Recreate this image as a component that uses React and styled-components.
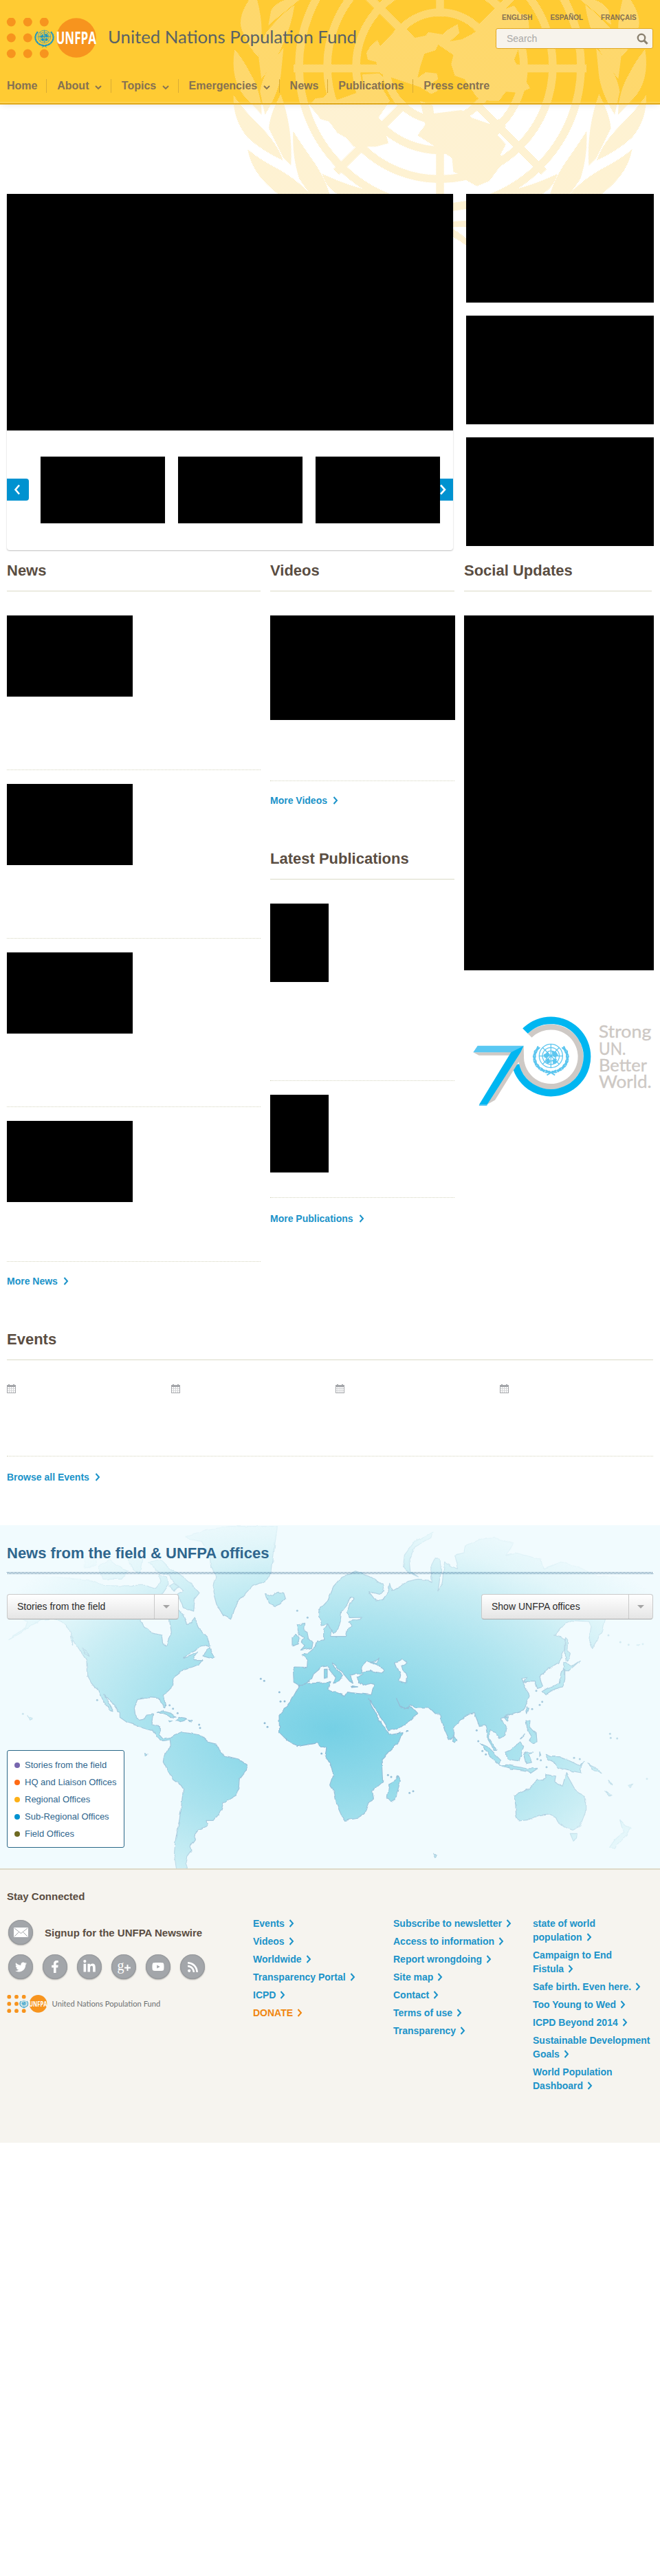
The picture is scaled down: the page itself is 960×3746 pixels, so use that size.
import React from "react";
import styled, { createGlobalStyle } from "styled-components";
import { FaTwitter, FaFacebookF, FaLinkedinIn, FaYoutube, FaRss } from "react-icons/fa";

const GlobalStyle = createGlobalStyle`
  * { box-sizing: border-box; }
  body { margin: 0; background: #fff; font-family: "Liberation Sans", Arial, Helvetica, sans-serif; color: #5a4d42; }
  svg { display: block; }
  ul { list-style: none; margin: 0; padding: 0; }
  h2, h3, p { margin: 0; }
`;

const Page = styled.div`
  position: relative;
  width: 960px;
  min-height: 3746px;
  overflow: hidden;
`;

/* ---------- header ---------- */
const HeaderBar = styled.header`
  height: 152px;
  background: #ffcb33;
  border-bottom: 2px solid #e0a91c;
  box-shadow: inset 0 -2px 0 #ffd350, 0 3px 9px -3px rgba(0, 0, 0, 0.12);
`;
const Watermark = styled.svg`
  position: absolute;
  top: 0;
  left: 330px;
`;
const HeaderContent = styled.div`
  position: relative;
  height: 152px;
  border-bottom: 2px solid #e0a91c;
`;
const HeaderTop = styled.div`
  display: flex;
  justify-content: space-between;
  height: 110px;
  padding: 20px 10px 0;
`;
const LogoLink = styled.a`
  margin: 6px 0 0 -1px;
`;
const HeaderTools = styled.div`
  width: 229px;
`;
const Languages = styled.ul`
  display: flex;
  gap: 26px;
  padding-left: 9px;
  font: bold 10px/12px "Liberation Sans", Arial, sans-serif;
  color: #857152;
`;
const SearchBox = styled.div`
  display: flex;
  justify-content: space-between;
  align-items: center;
  height: 30px;
  margin-top: 9px;
  padding: 0 6px 0 15px;
  border: 1px solid #e0a722;
  border-radius: 3px;
  background: #f7f3ec;
  font-size: 14px;
  color: #aaa9a7;
`;
const Nav = styled.nav`
  display: flex;
  padding-top: 5px;
`;
const NavItem = styled.a`
  display: flex;
  align-items: center;
  gap: 8.6px;
  height: 20px;
  padding: 0 12.8px 0 15px;
  border-right: 1px solid #d9ab35;
  font: bold 16px/20px "Liberation Sans", Arial, sans-serif;
  color: #857152;
  &:first-child { padding-left: 10px; }
  &:last-child { border: 0; }
  svg { margin-top: 5px; }
`;

/* ---------- main content ---------- */
const Media = styled.div`
  width: ${(p) => p.$w}px;
  height: ${(p) => p.$h}px;
  flex: none;
  background: #000;
  box-shadow: 0 0 1px rgba(0, 0, 0, 0.15);
`;
const Main = styled.main`
  position: relative;
  padding: 130px 9px 0 10px;
`;
const Hero = styled.section`
  display: flex;
  justify-content: space-between;
  height: 518px;
`;
const Feature = styled.div`
  width: 649px;
  background: #fff;
  border-radius: 0 0 4px 4px;
  box-shadow: 0 1px 2px rgba(0, 0, 0, 0.25);
`;
const Carousel = styled.div`
  display: flex;
  padding: 38px 0 0;
`;
const Thumbs = styled.div`
  display: flex;
  gap: 19px;
  margin-left: 17px;
`;
const Arrow = styled.button`
  display: flex;
  align-items: center;
  justify-content: center;
  width: ${(p) => (p.$next ? 19 : 32)}px;
  height: 32px;
  margin: 32px 0 0;
  padding: 0 ${(p) => (p.$next ? 11 : 3)}px 0 0;
  overflow: hidden;
  border: 0;
  border-radius: ${(p) => (p.$next ? 0 : "0 4px 4px 0")};
  background: #0092d0;
  color: #fff;
  svg { flex: none; }
`;
const SideStack = styled.div`
  display: flex;
  flex-direction: column;
  gap: 19px;
`;
const Columns = styled.section`
  display: grid;
  grid-template-columns: 369px 269px 273px;
  column-gap: 14px;
  height: 1118px;
  & > div:last-child { margin-left: -1px; }
`;
const Heading = styled.h2`
  height: 60px;
  margin-right: ${(p) => p.$end || 0}px;
  margin-bottom: 35px;
  border-bottom: 1px solid #dbdac6;
  font-size: 22px;
  line-height: 59px;
  color: #5a4d42;
  white-space: nowrap;
`;
const Entry = styled.article`
  height: ${(p) => p.$h}px;
  margin-bottom: ${(p) => p.$gap || 0}px;
  margin-right: ${(p) => p.$end || 0}px;
  border-bottom: 1px dotted #d4d4bd;
`;
const MoreLink = styled.a`
  display: flex;
  align-items: center;
  gap: 8px;
  height: ${(p) => p.$h || 56}px;
  margin-bottom: 27px;
  font-size: 14px;
  font-weight: bold;
  color: #1b93c9;
`;
const Anniversary = styled.div`
  margin: 54px 0 0 5px;
`;
const EventRow = styled.div`
  display: grid;
  grid-template-columns: repeat(4, 239px);
  height: 105px;
  margin-right: 1px;
  overflow: hidden;
  border-bottom: 1px dotted #d4d4bd;
`;

/* ---------- map ---------- */
const MapSection = styled.section`
  position: relative;
  height: 499px;
  margin-top: 40px;
  background: #f1fbfe;
`;
const MapArt = styled.svg`
  position: absolute;
  inset: 0;
`;
const MapOverlay = styled.div`
  position: relative;
  padding: 11px 10px 0;
`;
const MapHeading = styled.h2`
  height: 60px;
  font-size: 22px;
  line-height: 59px;
  color: #2f668e;
  background: repeating-conic-gradient(#2f668e 0 25%, transparent 0 50%) bottom / 2px 2px repeat-x;
  background-size: 2px 3px;
`;
const Selects = styled.div`
  display: flex;
  justify-content: space-between;
  margin-top: 29px;
`;
const SelectBox = styled.div`
  display: flex;
  width: 250px;
  height: 37px;
  border: 1px solid #c9c9c9;
  border-bottom-color: #aaa;
  border-radius: 4px;
  background: linear-gradient(#fff, #e5e5e5);
  font-size: 14px;
  line-height: 35px;
  color: #2b2b2b;
`;
const SelectLabel = styled.span`
  flex: 1;
  padding-left: 14px;
`;
const SelectToggle = styled.span`
  display: flex;
  align-items: center;
  justify-content: center;
  width: 35px;
  border-left: 1px solid #c9c9c9;
`;
const Legend = styled.ul`
  width: 171px;
  height: 142px;
  margin-top: 190px;
  padding: 8px 10px;
  border: 1px solid #2a6787;
  border-radius: 3px;
  background: #fff;
`;
const LegendItem = styled.li`
  display: flex;
  align-items: center;
  gap: 7px;
  height: 25px;
  font-size: 13px;
  color: #2f668e;
  white-space: nowrap;
  &::before {
    content: "";
    width: 8px;
    height: 8px;
    border-radius: 50%;
    background: ${(p) => p.$color};
  }
`;

/* ---------- footer ---------- */
const Footer = styled.footer`
  display: flex;
  height: 399px;
  border-top: 2px solid #ddd9c8;
  background: #f6f4ef;
`;
const Connect = styled.div`
  width: 368px;
  padding: 29px 0 0 10px;
  font-size: 15px;
  font-weight: bold;
`;
const ConnectTitle = styled.h3`
  font-size: 15px;
  line-height: 20px;
`;
const Newswire = styled.div`
  display: flex;
  align-items: center;
  gap: 17px;
  height: 36px;
  margin: 24px 0 14px 2px;
`;
const Socials = styled.div`
  display: flex;
  gap: 14px;
  margin: 0 0 23px 2px;
`;
const RoundIcon = styled.span`
  display: flex;
  align-items: center;
  justify-content: center;
  width: 36px;
  height: 36px;
  border-radius: 50%;
  background: #a3a6aa;
  box-shadow: inset 0 0 2px rgba(0, 0, 0, 0.3), 0 1px 2px rgba(0, 0, 0, 0.3);
  color: #fff;
`;
const GooglePlus = styled.span`
  display: flex;
  align-items: center;
  height: 32px;
  margin-top: -5px;
  font: normal 20px/32px "Liberation Serif", serif;
  svg { margin-top: 7px; }
`;
const FooterList = styled.ul`
  width: ${(p) => p.$w}px;
  padding-top: 68px;
  font: bold 14px/20px "Liberation Sans", Arial, sans-serif;
  white-space: nowrap;
`;
const FooterLink = styled.li`
  margin-bottom: 6px;
  color: ${(p) => (p.$accent ? "#f0860f" : "#1b93c9")};
  svg { display: inline-block; margin-left: 6px; vertical-align: -1px; }
`;

const Chevron = ({ w = 8, h = 12, d = "M1.5 1 6 6 1.5 11", sw = 2 }) => (
  <svg width={w} height={h} viewBox={`0 0 ${w} ${h}`} fill="none" stroke="currentColor" strokeWidth={sw}>
    <path d={d} />
  </svg>
);

const branch = Array.from({ length: 7 }, (_, i) => {
  const deg = 100 + i * 19;
  const a = (deg * Math.PI) / 180;
  return [45 * Math.cos(a), 40 * Math.sin(a), deg];
});
const UnEmblem = ({ color, ...rest }) => (
  <g {...rest}>
    <g fill="none" stroke={color} strokeWidth="2.4">
      <circle r="32" cy="-4" />
      <circle r="23" cy="-4" />
      <circle r="14" cy="-4" />
      <path d="M-32-4H32M0-36V28M-23-27 23 19M-23 19 23-27" />
    </g>
    <path fill={color} d="M-20-8-8-14-4-6-10 2-18 0ZM2-18 14-16 20-6 10 0 4-6ZM-16 6-4 4-2 14-10 18ZM4 6 16 4 14 16 6 18Z" />
    {[1, -1].map((s) => (
      <g key={s} transform={`scale(${s},1)`} fill={color}>
        {branch.map(([x, y, a]) => (
          <g key={a} transform={`translate(${x},${y})`}>
            <ellipse rx="8" ry="2.8" transform={`rotate(${a + 70})`} cx="1" />
            <ellipse rx="8" ry="2.8" transform={`rotate(${a + 115})`} cx="1" />
          </g>
        ))}
        <path d="M-12 47 2 38 4 41-10 50Z" />
      </g>
    ))}
  </g>
);

const Logo = ({ scale = 1, ink = "#596265", size = 25, textX = 157, textW = 362, textY = 63 }) => (
  <svg width={530 * scale} height={60 * scale} viewBox="9 26 530 60">
    {[32, 55, 78].map((y) =>
      [16.3, 40.3, 64.3].map((x) => (x > 60 && y === 55 ? null : <circle key={`${x}-${y}`} cx={x} cy={y} r="6.5" fill="#f7941e" />))
    )}
    <circle cx="111" cy="55" r="28.8" fill="#f7941e" />
    <UnEmblem color="#1c96c5" transform="translate(64.5,54.5) scale(.29)" />
    <text x="81.5" y="63.8" textLength="58.5" lengthAdjust="spacingAndGlyphs" fontFamily="Open Sans, sans-serif" fontWeight="700" fontSize="25.5" fill="#fff">UNFPA</text>
    <text x={textX} y={textY} textLength={textW} lengthAdjust="spacingAndGlyphs" fontFamily="Lato, sans-serif" fontWeight="400" fontSize={size} fill={ink}>United Nations Population Fund</text>
  </svg>
);

const leaves = [
  "M80 0Q30 90 62 150Q80 210 114 248Q140 140 110 0Z",
  "M245 22Q200 60 165 110Q120 160 115 250L125 345Q180 260 200 200Q235 110 245 22Z",
  "M160 45Q180 10 210 0H262Q200 60 150 110Z",
  "M28 215Q10 350 70 430L126 500Q125 400 85 320Q60 260 28 215Z",
  "M205 210Q130 310 120 400L138 500Q190 400 196 320Z",
  "M24 415Q20 520 75 600Q130 660 203 700Q185 630 120 550Q60 480 24 415Z",
  "M195 410Q155 500 152 560L205 690L232 722Q240 560 195 410Z",
  "M75 650Q90 760 185 846H300Q260 790 190 740Q110 690 75 650Z",
  "M240 572Q235 680 262 780L300 846H372Q350 760 300 680Q265 620 240 572Z",
  "M345 758Q360 820 400 846H575Q450 820 345 758Z",
];
const HeaderEmblem = () => (
  <Watermark width="630" height="370" viewBox="0 0 630 370">
    <defs>
      <pattern id="mesh" width="2" height="2" patternUnits="userSpaceOnUse">
        <path fill="#fde5a6" d="M0 0h1v1H0zM1 1h1v1H1z" />
      </pattern>
      <mask id="emblem">
        <g stroke="#fff" fill="none" strokeWidth="11.5">
          {[78.5, 122, 164, 205].map((r) => <circle key={r} cx="310" cy="96.5" r={r} />)}
          <path d="M310-120V300M97 99.5H523M159-51 461 250M461-51 159 250" />
        </g>
        <circle cx="310" cy="96.5" r="72.5" fill="#000" />
        <g transform="scale(.4018,.3333)" fill="#fff">
          {[0, 1].map((m) => (
            <g key={m} transform={m ? "translate(1542,0) scale(-1,1)" : undefined}>
              {leaves.map((d) => <path key={d} d={d} />)}
            </g>
          ))}
          <path d="M505 230 520 200 545 175 555 200 600 145 650 125 680 165 720 155 730 140 780 150 800 130 835 105 842 145 808 180 850 172 885 150 960 90 1005 40 1040 25 1060 60 1090 65 1095 130 1050 160 1060 200 1040 260 1070 330 1098 385 1060 405 1010 400 985 440 950 440 905 425 860 345 825 330 812 280 820 240 765 195 755 220 715 235 700 290 690 340 720 315 760 320 765 345 740 365 765 395 740 410 700 380 650 360 600 340 555 320 540 270 510 260Z" />
          <path d="M300 460 320 430 350 425 370 400 400 435 470 405 495 380 490 325 550 320 570 340 555 370 590 440 545 520 570 560 585 625 540 640 510 640 460 640 430 600 400 580 370 530 340 520Z" />
          <path d="M700 440 745 460 750 495 850 480 890 515 950 540 985 520 1010 550 980 590 1010 630 990 675 1005 700 950 790 905 812 865 785 840 760 820 750 815 690 780 660 690 590 718 545Z" />
          <path d="M819 966 870 962V990H819ZM819 1000Q850 1020 870 1048V1075Q845 1050 819 1034Z" />
        </g>
      </mask>
    </defs>
    <rect width="630" height="370" fill="url(#mesh)" mask="url(#emblem)" />
  </Watermark>
);

const westLand = [
  "M30 260 90 230 160 222 240 225 310 232 400 240 450 262 520 265 600 262 640 262 680 275 700 250 690 215 730 225 735 260 715 290 690 330 610 395 612 420 630 445 665 470 705 480 710 515 725 530 735 500 748 465 742 430 740 410 780 370 800 395 815 430 835 425 850 405 870 455 905 490 915 525 880 530 850 545 820 560 800 578 835 565 862 552 845 575 850 590 882 590 870 605 838 618 800 630 775 652 755 665 755 700 735 722 712 742 722 785 718 797 703 775 695 755 650 752 600 760 586 795 590 825 605 850 632 845 640 828 668 825 660 870 697 875 697 910 715 930 745 925 760 915 790 903 830 908 872 915 905 945 945 955 960 990 980 1005 1040 1020 1078 1045 1075 1070 1048 1105 1045 1140 1030 1178 975 1210 965 1245 930 1288 900 1288 905 1310 865 1330 845 1355 850 1370 828 1400 837 1415 815 1445 810 1475 818 1500 770 1500 760 1440 765 1380 780 1300 790 1240 800 1150 790 1135 755 1110 735 1075 712 1030 720 995 745 965 742 935 712 940 682 920 665 895 625 885 600 875 555 860 523 838 523 818 490 775 455 738 470 770 495 812 480 808 450 765 430 718 405 700 380 655 378 590 345 540 320 500 300 450 270 420 240 410 180 415 130 440 90 470 35 500 60 480 110 450 120 420 60 400 30 360Z",
  "M810 50 900 20 1000 5 1210 5 1200 80 1185 200 1160 245 1100 265 1065 305 1040 330 1022 370 1010 410 975 395 945 345 930 290 935 250 945 225 920 180 915 130 880 70 820 60Z",
  "M650 160 700 150 740 190 780 210 830 250 870 295 850 320 845 375 800 360 775 300 800 285 760 250 735 215 690 205Z",
  "M430 180 480 150 530 190 560 200 530 235 450 235ZM370 140 410 130 420 170 370 190ZM560 150 590 120 620 150 610 210 580 190ZM740 265 760 253 780 270 760 285Z",
  "M1160 298 1190 310 1210 292 1238 295 1246 320 1220 345 1200 352 1175 340 1165 315Z",
  "M1300 435 1328 430 1325 455 1340 465 1345 490 1365 515 1360 535 1312 545 1330 525 1315 510 1325 490 1308 478 1300 455Z",
  "M1275 490 1295 475 1305 490 1302 518 1275 527Z",
  "M885 570 915 530 925 555 938 575 930 583 900 575Z",
  "M685 820 710 810 745 820 768 838 740 835 715 820ZM768 850 785 838 815 848 790 857ZM735 850 753 852 740 858ZM820 850 836 853 825 857Z",
  "M355 535 380 550 390 572 372 560ZM305 480 318 490 320 520 308 500ZM120 830 138 845 128 850ZM632 995 645 1001 634 1008Z",
];
const eastLand = [
  "M-75 702-40 690 10 688 60 685 50 715 100 735 122 747 135 728 175 733 240 740 252 695 235 690 205 700 190 690 178 665 205 648 190 648 165 650 150 655 160 690 145 680 120 650 90 620 70 600 72 612 115 655 95 680 75 690 85 665 45 615 20 620-10 645-20 670-45 690-75 698-98 685-100 640-97 618-40 620-38 590-62 565-40 560 0 525 5 505 35 500 35 455 50 430 65 460 62 485 130 485 138 450 155 440 140 420 195 410 200 402 148 403 135 380 150 340 165 318 150 310 135 345 110 375 105 420 95 455 75 475 50 430 25 435 10 395 12 370 50 330 75 270 110 230 170 200 230 220 290 260 295 290 270 300 230 290 260 330 290 325 315 290 320 250 330 285 400 245 445 235 490 240 505 250 500 180 520 140 540 150 545 200 530 290 550 250 560 160 590 180 620 190 605 130 645 120 650 90 720 60 780 55 860 80 830 130 870 120 980 150 990 190 1070 160 1160 190 1220 220 1300 225 1380 235 1470 300 1430 380 1260 410 1250 460 1205 535 1190 500 1200 440 1190 420 1110 415 1085 430 1040 480 1085 495 1082 550 1055 600 1010 630 975 660 988 705 965 712 955 680 935 680 905 685 920 660 897 672 915 710 930 745 905 805 835 830 805 840 830 890 825 915 797 930 785 905 755 895 755 930 790 985 780 985 750 935 738 870 712 875 690 820 655 828 600 880 598 925 580 935 560 890 540 825 520 825 490 795 430 795 412 780 405 800 370 798 350 755 365 790 385 802 412 790 440 820 415 850 370 880 315 897 300 870 270 820 238 770 228 755 240 785 285 870 310 900 318 915 375 905 360 945 285 1020 290 1120 245 1160 250 1195 230 1205 215 1245 185 1278 125 1288 110 1265 90 1220 80 1170 62 1130 75 1090 65 1050 40 1005 45 970 20 965 5 950-85 965-130 935-160 905-162 830-110 765Z",
  "M380 180 385 130 430 70 510 30 500 55 430 95 405 150 410 200 445 225 400 205Z",
  "M355 1093 367 1115 345 1195 325 1206 310 1190 318 1130 340 1118Z",
  "M600 920 614 940 605 952 595 945Z",
  "M718 953 745 965 805 1025 800 1045 765 1015Z",
  "M800 1047 830 1045 920 1062 968 1060 935 1082 925 1072 850 1062Z",
  "M828 990 850 980 890 945 905 965 885 1028 835 1020Z",
  "M905 1000 920 990 950 990 925 1000 930 1010 940 1035 915 1040ZM975 985 980 1005 975 1010Z",
  "M1000 1000 1025 1010 1060 1010 1110 1030 1150 1050 1170 1030 1150 1060 1158 1080 1100 1070 1055 1060 1040 1035 1010 1020Z",
  "M915 852 933 852 930 880 960 905 963 945 945 950 930 940 940 925 920 880ZM890 932 910 910 900 922Z",
  "M915 795 928 800 920 822Z",
  "M820 835 842 835 835 855Z",
  "M985 725 1010 710 1060 690 1068 640 1085 625 1085 675 1075 705 1040 715 1000 740Z",
  "M1080 598 1115 615 1150 592 1105 632 1078 632Z",
  "M1088 490 1097 500 1095 540 1108 560 1100 590 1090 595 1085 540Z",
  "M862 1180 930 1150 965 1108 990 1112 1005 1088 1045 1095 1040 1118 1075 1138 1090 1082 1125 1145 1175 1195 1175 1250 1150 1315 1120 1330 1080 1315 1055 1295 1045 1275 1010 1260 970 1265 925 1285 885 1290 872 1270 870 1220Z",
  "M1108 1345 1138 1345 1135 1365 1122 1378Z",
  "M1325 1285 1350 1310 1372 1320 1350 1355 1300 1410 1280 1405 1305 1370 1340 1340Z",
  "M1185 1040 1215 1055 1245 1082 1215 1070ZM1258 1160 1290 1178 1275 1178ZM1362 1135 1385 1128 1370 1145ZM1275 1112 1292 1130 1283 1130ZM512 1432 528 1438 518 1448ZM38 628 48 628 48 665 38 668ZM395 896 402 900 393 904ZM155 700 180 705 160 707ZM1395 522 1412 521 1400 526Z",
];
const seas = [
  "M220 590 245 605 265 605 297 635 285 645 240 635 195 640 200 610Z",
  "M240 600 275 582 265 598Z",
  "M345 600 375 583 398 600 372 612 380 640 395 650 392 687 362 680 368 655Z",
];
const isles = [[1138, 670], [1153, 679], [1219, 728], [1224, 769], [1242, 768], [1155, 863], [1167, 880], [869, 870], [873, 884], [740, 785], [755, 800], [775, 820], [100, 823], [424, 763], [1297, 373], [1342, 403], [1403, 996], [1693, 1090], [1707, 1098], [1787, 1168], [1803, 1160], [2080, 895], [2087, 942], [2366, 770], [2355, 784], [2322, 802], [2340, 722], [2505, 1015], [2530, 1020], [2662, 910], [2665, 928], [2693, 930], [2655, 480], [2707, 510], [2743, 521], [2805, 518], [2105, 985], [2120, 1000], [2345, 1020], [2360, 1025], [2385, 1055], [2823, 1106]];

const WorldMap = () => (
  <MapArt width="960" height="499" viewBox="0 0 2880 1497" preserveAspectRatio="none">
    <defs>
      <radialGradient id="land" gradientUnits="userSpaceOnUse" cx="0" cy="0" r="1" gradientTransform="translate(1450,890) scale(1750,1000)">
        <stop offset="0" stopColor="#75d0e5" />
        <stop offset=".25" stopColor="#8fd9e9" />
        <stop offset=".5" stopColor="#aee4ef" />
        <stop offset=".68" stopColor="#c8edf4" />
        <stop offset=".83" stopColor="#e2f6fa" />
        <stop offset="1" stopColor="#f1fbfe" />
      </radialGradient>
      <radialGradient id="coast" gradientUnits="userSpaceOnUse" cx="0" cy="0" r="1" gradientTransform="translate(1450,890) scale(1750,1000)">
        <stop offset="0" stopColor="#86b5d2" />
        <stop offset=".6" stopColor="#abcddf" />
        <stop offset=".85" stopColor="#d9eff5" />
        <stop offset="1" stopColor="#f1fbfe" />
      </radialGradient>
      <radialGradient id="landEast" href="#land" gradientTransform="translate(70,890) scale(1750,1000)" />
      <radialGradient id="coastEast" href="#coast" gradientTransform="translate(70,890) scale(1750,1000)" />
      <filter id="coastline" x="0" y="0" width="2880" height="1497" filterUnits="userSpaceOnUse" colorInterpolationFilters="sRGB">
        <feTurbulence type="fractalNoise" baseFrequency=".035" numOctaves="2" seed="4" />
        <feDisplacementMap in="SourceGraphic" scale="13" xChannelSelector="R" yChannelSelector="G" />
      </filter>
    </defs>
    <g filter="url(#coastline)" strokeWidth="3.5" strokeLinejoin="round">
      <path d={westLand.join("")} fill="url(#land)" stroke="url(#coast)" />
      <g transform="translate(1380,0)" stroke="url(#coastEast)">
        <path d={eastLand.join("")} fill="url(#landEast)" />
        <path d={seas.join("")} fill="#f1fbfe" />
      </g>
    </g>
    {isles.map(([x, y]) => <circle key={`${x}-${y}`} cx={x} cy={y} r="4.5" fill="url(#coast)" />)}
  </MapArt>
);

const SeventyLogo = () => (
  <svg width="275" height="150" viewBox="0 0 825 450">
    <g fill="none">
      <path d="M272 123A130 130 0 1 1 234 206" stroke="#cec9c5" strokeWidth="24" />
      <path d="M252 103A158 158 0 1 1 210 250" stroke="#00b6f1" strokeWidth="32" />
    </g>
    <path fill="#cec9c5" d="M25 196 50 209H185L195 195ZM245 167 85 424 120 404 222 240 246 215Z" />
    <path fill="#59c8f3" d="M44 167H245L195 196H25Z" />
    <path fill="#00b6f1" d="M245 167 190 196 50 425H85L232 195Z" />
    <path fill="#59c8f3" d="M52 423H85V429H50Z" />
    <UnEmblem color="#5dc6ef" transform="translate(364,218) scale(1.6)" />
    <g fill="#cdc8c4" stroke="#cdc8c4" strokeWidth="1" fontFamily="Lato, sans-serif" fontSize="76">
      <text x="572" y="133" textLength="230" lengthAdjust="spacingAndGlyphs">Strong</text>
      <text x="573" y="206" textLength="118" lengthAdjust="spacingAndGlyphs">UN.</text>
      <text x="573" y="279" textLength="210" lengthAdjust="spacingAndGlyphs">Better</text>
      <text x="573" y="352" textLength="230" lengthAdjust="spacingAndGlyphs">World.</text>
    </g>
  </svg>
);

const Calendar = () => (
  <svg width="13" height="13" viewBox="0 0 13 13">
    <path fill="#a4a6aa" d="M0 1h13v12H0zM2 0h2v1H2zM9 0h2v1H9z" />
    <path fill="#d3d4d6" d="M1 4h11v8H1z" />
    <path fill="#fff" d="M1 4h2v2H1zM4 4h2v2H4zM7 4h2v2H7zM10 4h2v2h-2zM1 7h2v2H1zM4 7h2v2H4zM7 7h2v2H7zM10 7h2v2h-2zM1 10h2v2H1zM4 10h2v2H4zM7 10h2v2H7zM10 10h2v2h-2z" />
  </svg>
);

const navItems = [["Home"], ["About", 1], ["Topics", 1], ["Emergencies", 1], ["News"], ["Publications"], ["Press centre"]];
const legend = [["Stories from the field", "#7766ae"], ["HQ and Liaison Offices", "#ff6a13"], ["Regional Offices", "#fdb017"], ["Sub-Regional Offices", "#0092d0"], ["Field Offices", "#6e6a22"]];
const footerLists = [
  [204, ["Events", "Videos", "Worldwide", "Transparency Portal", "ICPD", "DONATE"]],
  [203, ["Subscribe to newsletter", "Access to information", "Report wrongdoing", "Site map", "Contact", "Terms of use", "Transparency"]],
  [180, ["state of world|population", "Campaign to End|Fistula", "Safe birth. Even here.", "Too Young to Wed", "ICPD Beyond 2014", "Sustainable Development|Goals", "World Population|Dashboard"]],
];

const Select = ({ children }) => (
  <SelectBox>
    <SelectLabel>{children}</SelectLabel>
    <SelectToggle>
      <svg width="10" height="5" viewBox="0 0 10 5"><path fill="#a5a5a5" d="M0 0h10L5 5z" /></svg>
    </SelectToggle>
  </SelectBox>
);

const Header = () => (
  <HeaderBar>
    <HeaderEmblem />
    <HeaderContent>
      <HeaderTop>
        <LogoLink><Logo /></LogoLink>
        <HeaderTools>
          <Languages><li>ENGLISH</li><li>ESPAÑOL</li><li>FRANÇAIS</li></Languages>
          <SearchBox>
            Search
            <svg width="17" height="17" viewBox="0 0 17 17" fill="none" stroke="#8b8170" strokeWidth="2.4">
              <circle cx="7" cy="7" r="5.2" />
              <path d="M10.6 10.6 15.6 15.8" strokeWidth="3" />
            </svg>
          </SearchBox>
        </HeaderTools>
      </HeaderTop>
      <Nav>
        {navItems.map(([label, menu]) => (
          <NavItem key={label}>
            {label}
            {menu && <Chevron w={10} h={7} d="M1 1 5 5 9 1" sw={1.9} />}
          </NavItem>
        ))}
      </Nav>
    </HeaderContent>
  </HeaderBar>
);

export default function App() {
  return (
    <Page>
      <GlobalStyle />
      <Header />
      <Main>
        <Hero>
          <Feature>
            <Media $w={649} $h={344} />
            <Carousel>
              <Arrow aria-label="Previous"><Chevron w={9} h={16} d="M8 1.5 2.5 8 8 14.5" sw={2.6} /></Arrow>
              <Thumbs>
                {[0, 1, 2].map((i) => <Media key={i} $w={181} $h={97} />)}
              </Thumbs>
              <Arrow $next aria-label="Next"><Chevron w={9} h={16} d="M1 1.5 7 8 1 14.5" sw={2.6} /></Arrow>
            </Carousel>
          </Feature>
          <SideStack>
            {[0, 1, 2].map((i) => <Media key={i} $w={273} $h={158} />)}
          </SideStack>
        </Hero>
        <Columns>
          <div>
            <Heading>News</Heading>
            {[0, 1, 2, 3].map((i) => (
              <Entry key={i} $h={i === 3 ? 205 : 225} $gap={i === 3 ? 0 : 20}>
                <Media $w={183} $h={118} />
              </Entry>
            ))}
            <MoreLink>More News <Chevron /></MoreLink>
          </div>
          <div>
            <Heading $end={1}>Videos</Heading>
            <Entry $h={241} $end={1}><Media $w={269} $h={152} /></Entry>
            <MoreLink>More Videos <Chevron /></MoreLink>
            <Heading $end={1}>Latest Publications</Heading>
            <Entry $h={258} $gap={20} $end={1}><Media $w={85} $h={114} /></Entry>
            <Entry $h={150} $end={1}><Media $w={85} $h={113} /></Entry>
            <MoreLink $h={60}>More Publications <Chevron /></MoreLink>
          </div>
          <div>
            <Heading $end={1}>Social Updates</Heading>
            <Media $w={276} $h={516} />
            <Anniversary><SeventyLogo /></Anniversary>
          </div>
        </Columns>
        <section>
          <Heading $end={1}>Events</Heading>
          <EventRow>{[0, 1, 2, 3].map((i) => <Calendar key={i} />)}</EventRow>
          <MoreLink $h={60}>Browse all Events <Chevron /></MoreLink>
        </section>
      </Main>
      <MapSection>
        <WorldMap />
        <MapOverlay>
          <MapHeading>News from the field &amp; UNFPA offices</MapHeading>
          <Selects>
            <Select>Stories from the field</Select>
            <Select>Show UNFPA offices</Select>
          </Selects>
          <Legend>
            {legend.map(([label, color]) => <LegendItem key={label} $color={color}>{label}</LegendItem>)}
          </Legend>
        </MapOverlay>
      </MapSection>
      <Footer>
        <Connect>
          <ConnectTitle>Stay Connected</ConnectTitle>
          <Newswire>
            <RoundIcon>
              <svg width="21" height="14" viewBox="0 0 21 14">
                <rect width="21" height="14" rx="1" fill="#fff" />
                <path d="M1 1 10.5 8.5 20 1M1 13 7.5 6.5M20 13 13.5 6.5" fill="none" stroke="#a3a6aa" />
              </svg>
            </RoundIcon>
            Signup for the UNFPA Newswire
          </Newswire>
          <Socials>
            <RoundIcon><FaTwitter size={17} /></RoundIcon>
            <RoundIcon><FaFacebookF size={18} /></RoundIcon>
            <RoundIcon><FaLinkedinIn size={20} /></RoundIcon>
            <RoundIcon>
              <GooglePlus>
                g
                <svg width="9" height="9" viewBox="0 0 9 9"><path fill="#fff" d="M3.5 0h2v3.5H9v2H5.5V9h-2V5.5H0v-2h3.5z" /></svg>
              </GooglePlus>
            </RoundIcon>
            <RoundIcon><FaYoutube size={18} /></RoundIcon>
            <RoundIcon><FaRss size={17} /></RoundIcon>
          </Socials>
          <Logo scale={0.446} ink="#6d7173" textX={156} textW={354} size={27} textY={65} />
        </Connect>
        {footerLists.map(([w, items]) => (
          <FooterList key={w} $w={w}>
            {items.map((item) => (
              <FooterLink key={item} $accent={item === "DONATE"}>
                {item.split("|").map((line, i) => <React.Fragment key={line}>{i > 0 && <br />}{line}</React.Fragment>)}
                <Chevron />
              </FooterLink>
            ))}
          </FooterList>
        ))}
      </Footer>
    </Page>
  );
}
